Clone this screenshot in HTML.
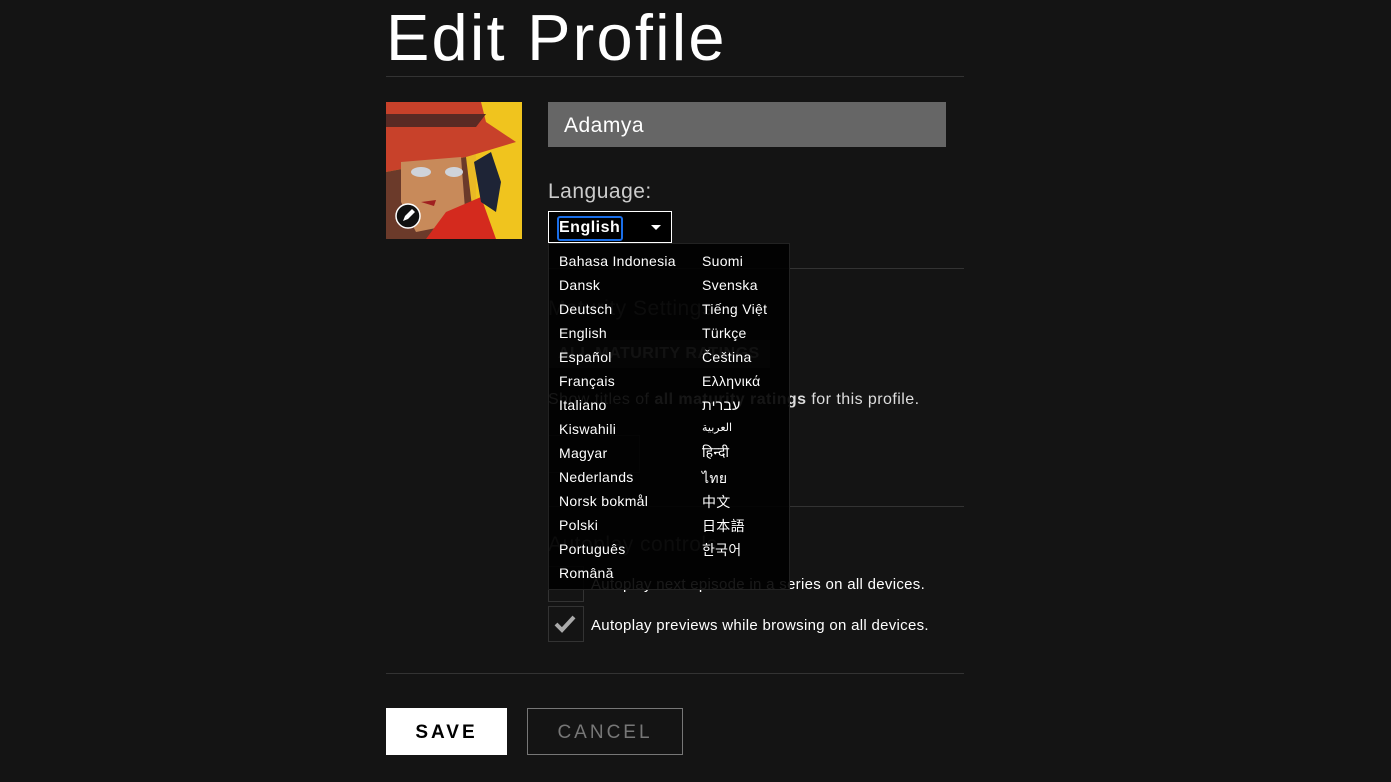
<!DOCTYPE html>
<html><head><meta charset="utf-8"><style>
body{margin:0;width:1391px;height:782px;background:#141414;font-family:"Liberation Sans","Noto Sans CJK SC",sans-serif;color:#fff;overflow:hidden;position:relative}
.a{position:absolute}
.hr{position:absolute;height:1px;background:#333}
.dd div{position:absolute;font-size:14px;color:#fff;white-space:nowrap;letter-spacing:0.3px}
</style></head><body>
<div class="a" style="left:386px;top:0px;font-size:65px;line-height:76px;letter-spacing:2.2px">Edit Profile</div>
<div class="hr" style="left:386px;top:76px;width:578px"></div>
<svg class="a" style="left:386px;top:102px" width="136" height="137" viewBox="0 0 136 137">
<rect width="136" height="137" fill="#e9b925"/>
<rect x="90" width="46" height="137" fill="#f0c41e"/>
<path d="M0 0H95L100 20 130 40 80 55 0 70Z" fill="#c8412a"/>
<path d="M0 12H100L90 25H0Z" fill="#5a2a24"/>
<path d="M0 70 80 55 90 137H0Z" fill="#6b3a2a"/>
<path d="M15 60 75 55 80 120 30 130 15 100Z" fill="#c88a5a"/>
<ellipse cx="35" cy="70" rx="10" ry="5" fill="#cfd3da"/><ellipse cx="68" cy="70" rx="9" ry="5" fill="#cfd3da"/>
<path d="M35 100 50 98 48 104Z" fill="#a02020"/>
<path d="M60 110 95 95 110 137H40Z" fill="#d42a1e"/>
<path d="M88 60 105 50 115 80 110 110 95 100Z" fill="#1e2436"/>
<circle cx="22" cy="114" r="12" fill="#111" stroke="#fff" stroke-width="1.5"/>
<path d="M17 119l2-5 7-7 3 3-7 7z" fill="#fff"/>
</svg>
<div class="a" style="left:548px;top:102px;width:398px;height:45px;background:#666"></div>
<div class="a" style="left:564px;top:114px;font-size:21px;letter-spacing:0.5px">Adamya</div>
<div class="a" style="left:548px;top:180px;font-size:21px;color:#ccc;letter-spacing:0.5px">Language:</div>
<div class="a" style="left:548px;top:211px;width:122px;height:30px;border:1px solid #fff;background:#000"></div>
<div class="a" style="left:557px;top:216px;width:62px;height:21px;border:2px solid #1a6ee8;border-radius:3px"></div>
<div class="a" style="left:559px;top:219px;font-size:16px;font-weight:bold;letter-spacing:0.5px">English</div>
<div class="a" style="left:651px;top:225px;width:0;height:0;border-left:5px solid transparent;border-right:5px solid transparent;border-top:5px solid #fff"></div>
<div class="hr" style="left:548px;top:268px;width:416px"></div>
<div class="a" style="left:548px;top:297px;font-size:21px;color:#777;letter-spacing:0.5px">Maturity Settings:</div>
<div class="a" style="left:548px;top:340px;padding:5px 10px;background:#333;font-size:16px;color:#bbb;font-weight:bold;letter-spacing:0.5px">ALL MATURITY RATINGS</div>
<div class="a" style="left:548px;top:391px;font-size:16px;color:#ddd;letter-spacing:0.45px">Show titles of <b>all maturity ratings</b> for this profile.</div>
<div class="a" style="left:548px;top:435px;width:90px;height:36px;border:1px solid #333"></div>
<div class="hr" style="left:548px;top:506px;width:416px"></div>
<div class="a" style="left:548px;top:533px;font-size:21px;color:#777;letter-spacing:0.5px">Autoplay controls</div>
<div class="a" style="left:548px;top:566px;width:34px;height:34px;border:1px solid #333"></div>
<div class="a" style="left:591px;top:576px;font-size:15px;letter-spacing:0.3px">Autoplay next episode in a series on all devices.</div>
<div class="a" style="left:548px;top:606px;width:34px;height:34px;border:1px solid #333"></div>
<svg class="a" style="left:553px;top:613px" width="24" height="22"><path d="M3 11l6 6 12-13" stroke="#aaa" stroke-width="4" fill="none"/></svg>
<div class="a" style="left:591px;top:617px;font-size:15px;letter-spacing:0.3px">Autoplay previews while browsing on all devices.</div>
<div class="dd a" style="left:548px;top:243px;width:240px;height:345px;background:rgba(0,0,0,0.9);border:1px solid #222">
<div style="left:10px;top:9px">Bahasa Indonesia</div><div style="left:10px;top:33px">Dansk</div><div style="left:10px;top:57px">Deutsch</div><div style="left:10px;top:81px">English</div><div style="left:10px;top:105px">Español</div><div style="left:10px;top:129px">Français</div><div style="left:10px;top:153px">Italiano</div><div style="left:10px;top:177px">Kiswahili</div><div style="left:10px;top:201px">Magyar</div><div style="left:10px;top:225px">Nederlands</div><div style="left:10px;top:249px">Norsk bokmål</div><div style="left:10px;top:273px">Polski</div><div style="left:10px;top:297px">Português</div><div style="left:10px;top:321px">Română</div>
<div style="left:153px;top:9px">Suomi</div><div style="left:153px;top:33px">Svenska</div><div style="left:153px;top:57px">Tiếng Việt</div><div style="left:153px;top:81px">Türkçe</div><div style="left:153px;top:105px">Čeština</div><div style="left:153px;top:129px">Ελληνικά</div><div style="left:153px;top:153px">עברית</div><div style="left:153px;top:177px;font-size:11px">العربية</div><div style="left:153px;top:199px">हिन्दी</div><div style="left:153px;top:224px">ไทย</div><div style="left:153px;top:248px">中文</div><div style="left:153px;top:272px">日本語</div><div style="left:153px;top:296px">한국어</div>
</div>
<div class="hr" style="left:386px;top:673px;width:578px"></div>
<div class="a" style="left:386px;top:708px;width:121px;height:47px;background:#fff;color:#000;font-size:19px;font-weight:bold;letter-spacing:3px;text-align:center;line-height:49px">SAVE</div>
<div class="a" style="left:527px;top:708px;width:154px;height:45px;border:1px solid #777;color:#777;font-size:19px;letter-spacing:3px;text-align:center;line-height:48px">CANCEL</div>
</body></html>
